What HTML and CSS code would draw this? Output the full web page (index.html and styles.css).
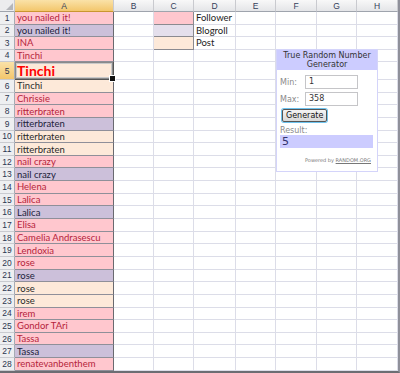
FILE: index.html
```html
<!DOCTYPE html>
<html lang="en">
<head>
    <meta charset="UTF-8">
    <meta name="viewport" content="width=device-width, initial-scale=1.0">
    <title>Blog list</title>
    <link rel="stylesheet" href="styles.css">
</head>
<body>
  <div class="screen">
    <div class="sheet">
      <div class="row head">
        <span class="corner"></span><span class="sel">A</span><span>B</span><span>C</span><span>D</span><span>E</span><span>F</span><span>G</span><span>H</span>
      </div>
      <div class="row top"><span class="num">1</span><span class="a pink">you nailed it!</span><span></span><span class="key pink"></span><span class="d">Follower</span><span></span><span></span><span></span><span></span></div>
      <div class="row top"><span class="num">2</span><span class="a lila">you nailed it!</span><span></span><span class="key blog"></span><span class="d">Blogroll</span><span></span><span></span><span></span><span></span></div>
      <div class="row top"><span class="num">3</span><span class="a pink">INA</span><span></span><span class="key post"></span><span class="d">Post</span><span></span><span></span><span></span><span></span></div>
      <div class="row top"><span class="num">4</span><span class="a pink">Tinchi</span><span></span><span></span><span></span><span></span><span></span><span></span><span></span></div>
      <div class="row big"><span class="num sel">5</span><span class="a post active">Tinchi</span><span></span><span></span><span></span><span></span><span></span><span></span><span></span></div>
      <div class="row"><span class="num">6</span><span class="a post">Tinchi</span><span></span><span></span><span></span><span></span><span></span><span></span><span></span></div>
      <div class="row"><span class="num">7</span><span class="a pink">Chrissie</span><span></span><span></span><span></span><span></span><span></span><span></span><span></span></div>
      <div class="row"><span class="num">8</span><span class="a pink">ritterbraten</span><span></span><span></span><span></span><span></span><span></span><span></span><span></span></div>
      <div class="row"><span class="num">9</span><span class="a lila">ritterbraten</span><span></span><span></span><span></span><span></span><span></span><span></span><span></span></div>
      <div class="row"><span class="num">10</span><span class="a post">ritterbraten</span><span></span><span></span><span></span><span></span><span></span><span></span><span></span></div>
      <div class="row"><span class="num">11</span><span class="a post">ritterbraten</span><span></span><span></span><span></span><span></span><span></span><span></span><span></span></div>
      <div class="row"><span class="num">12</span><span class="a pink">nail crazy</span><span></span><span></span><span></span><span></span><span></span><span></span><span></span></div>
      <div class="row"><span class="num">13</span><span class="a lila">nail crazy</span><span></span><span></span><span></span><span></span><span></span><span></span><span></span></div>
      <div class="row"><span class="num">14</span><span class="a pink">Helena</span><span></span><span></span><span></span><span></span><span></span><span></span><span></span></div>
      <div class="row"><span class="num">15</span><span class="a pink">Lalica</span><span></span><span></span><span></span><span></span><span></span><span></span><span></span></div>
      <div class="row"><span class="num">16</span><span class="a lila">Lalica</span><span></span><span></span><span></span><span></span><span></span><span></span><span></span></div>
      <div class="row"><span class="num">17</span><span class="a pink">Elisa</span><span></span><span></span><span></span><span></span><span></span><span></span><span></span></div>
      <div class="row"><span class="num">18</span><span class="a pink">Camelia Andrasescu</span><span></span><span></span><span></span><span></span><span></span><span></span><span></span></div>
      <div class="row"><span class="num">19</span><span class="a pink">Lendoxia</span><span></span><span></span><span></span><span></span><span></span><span></span><span></span></div>
      <div class="row"><span class="num">20</span><span class="a pink">rose</span><span></span><span></span><span></span><span></span><span></span><span></span><span></span></div>
      <div class="row"><span class="num">21</span><span class="a lila">rose</span><span></span><span></span><span></span><span></span><span></span><span></span><span></span></div>
      <div class="row"><span class="num">22</span><span class="a post">rose</span><span></span><span></span><span></span><span></span><span></span><span></span><span></span></div>
      <div class="row"><span class="num">23</span><span class="a post">rose</span><span></span><span></span><span></span><span></span><span></span><span></span><span></span></div>
      <div class="row"><span class="num">24</span><span class="a pink">irem</span><span></span><span></span><span></span><span></span><span></span><span></span><span></span></div>
      <div class="row"><span class="num">25</span><span class="a pink">Gondor TAri</span><span></span><span></span><span></span><span></span><span></span><span></span><span></span></div>
      <div class="row"><span class="num">26</span><span class="a pink">Tassa</span><span></span><span></span><span></span><span></span><span></span><span></span><span></span></div>
      <div class="row"><span class="num">27</span><span class="a lila">Tassa</span><span></span><span></span><span></span><span></span><span></span><span></span><span></span></div>
      <div class="row"><span class="num">28</span><span class="a pink">renatevanbenthem</span><span></span><span></span><span></span><span></span><span></span><span></span><span></span></div>
    </div>

    <div class="rng">
      <div class="rng-title">True Random Number Generator</div>
      <div class="rng-body">
        <div class="field"><label>Min:</label><span class="box">1</span></div>
        <div class="field"><label>Max:</label><span class="box">358</span></div>
        <button class="gen">Generate</button>
        <div class="res-label">Result:</div>
        <div class="res">5</div>
        <div class="powered">Powered by <u>RANDOM.ORG</u></div>
      </div>
    </div>
  </div>
</body>
</html>
```

FILE: styles.css
```css
*{
  box-sizing:border-box;
}
body{
  margin:0;
  background:#fff;
  font-family:Lato, "Liberation Sans", sans-serif;
}
.screen{
  position:relative;
  width:400px;
  height:373px;
  border-right:2px solid #8f909a;
  border-bottom:2px solid #6c6d73;
  overflow:hidden;
}

/* grid */
.row{
  display:grid;
  grid-template-columns:15px 99px 40px 40px 42px 40px 41px 40px 41px;
  height:12.652px;
}
.row.top{ height:12.5px; }
.row.big{ height:18px; }
.row > span{
  display:flex;
  align-items:center;
  padding-left:2px;
  border-right:1px solid #dcdde8;
  border-bottom:1px solid #dcdde8;
  font-size:9.5px;
  color:#222;
  white-space:nowrap;
  overflow:hidden;
}

/* column + row headers */
.row.head{ height:12px; }
.row.head span{
  justify-content:center;
  padding:0;
  background:linear-gradient(#f8f8f8, #e4e5e8);
  border-right:1px solid #c9cacf;
  border-bottom:1px solid #9fa4ad;
  color:#34405a;
  font-family:"Liberation Sans", sans-serif;
  font-size:8.5px;
}
.row.head .sel{
  background:linear-gradient(#fae2a8, #f3c66c);
  border-bottom-color:#c9962f;
}
.row.head .corner{
  position:relative;
  background:#ececee;
}
.corner:after{
  content:"";
  position:absolute;
  right:1px;
  bottom:1px;
  border-left:7px solid transparent;
  border-bottom:7px solid #b4b6bb;
}
.row > .num{
  justify-content:center;
  padding:0;
  background:#eeeff1;
  border-right:1px solid #a6abb4;
  border-bottom:1px solid #c9cbd0;
  color:#2c3650;
  font-family:"Liberation Sans", sans-serif;
  font-size:8.5px;
}
.row > .num.sel{
  background:linear-gradient(#fae2a8, #f3c66c);
}

/* column A */
.row > .a{
  border-right:1px solid #6a6a70;
  border-bottom:1px solid #8f8f99;
}
.pink{ background:#ffc7ce; }
.row > .a.pink{ color:#b5243b; }
.lila{ background:#ccc0da; }
.row > .a.lila{ color:#22223a; }
.post{ background:#fde9d9; }
.row > .a.post{ color:#2a2a2a; }
.blog{ background:#e4dfec; }

.row > .a.active{
  position:relative;
  color:#ff0000;
  font-size:14px;
  font-weight:bold;
  box-shadow:inset 0 0 0 1px #8a8a8a, inset 0 0 0 2px #c9c9c9;
  border-right-color:#555;
  border-bottom-color:#555;
  overflow:visible;
}
.active:after{
  content:"";
  position:absolute;
  right:-3px;
  bottom:-3px;
  width:5px;
  height:5px;
  background:#111;
  border:1px solid #fff;
  z-index:2;
}

.row > .key{
  border-right:1px solid #8a8a90;
  border-bottom:1px solid #8a8a90;
}
.row > .d{ color:#222; }

/* random.org widget */
.rng{
  position:absolute;
  left:276px;
  top:49px;
  width:102px;
  height:123px;
  background:#fff;
  border:1px solid #d4d4fa;
  font-family:"DejaVu Sans", Verdana, sans-serif;
}
.rng-title{
  background:#ccccff;
  color:#333;
  font-size:8px;
  line-height:9px;
  text-align:center;
  padding:1px 6px 1px;
}
.rng-body{
  padding:5px 3px 0 3px;
}
.field{
  display:flex;
  align-items:center;
  margin-bottom:3px;
}
.field label{
  width:25px;
  color:#8a8a8a;
  font-size:8px;
}
.box{
  width:53px;
  height:14px;
  border:1px solid #c5c5c8;
  color:#333;
  font-size:8px;
  padding:1px 3px;
}
.gen{
  display:block;
  margin:1px 0 0 2px;
  height:13px;
  padding:0 3px;
  font-family:"DejaVu Sans", Verdana, sans-serif;
  font-size:8px;
  color:#111;
  background:linear-gradient(#f4f4f4, #d8d8d8);
  border:1px solid #555;
  border-radius:2px;
  box-shadow:0 0 0 1px #6ec3ee;
}
.res-label{
  color:#8a8a8a;
  font-size:8px;
  margin-top:4px;
}
.res{
  background:#ccccff;
  color:#33336b;
  font-size:11px;
  height:13px;
  line-height:13px;
  padding-left:2px;
  margin-right:1px;
}
.powered{
  text-align:right;
  color:#777;
  font-size:5px;
  margin-top:9px;
  padding-right:3px;
}
```
